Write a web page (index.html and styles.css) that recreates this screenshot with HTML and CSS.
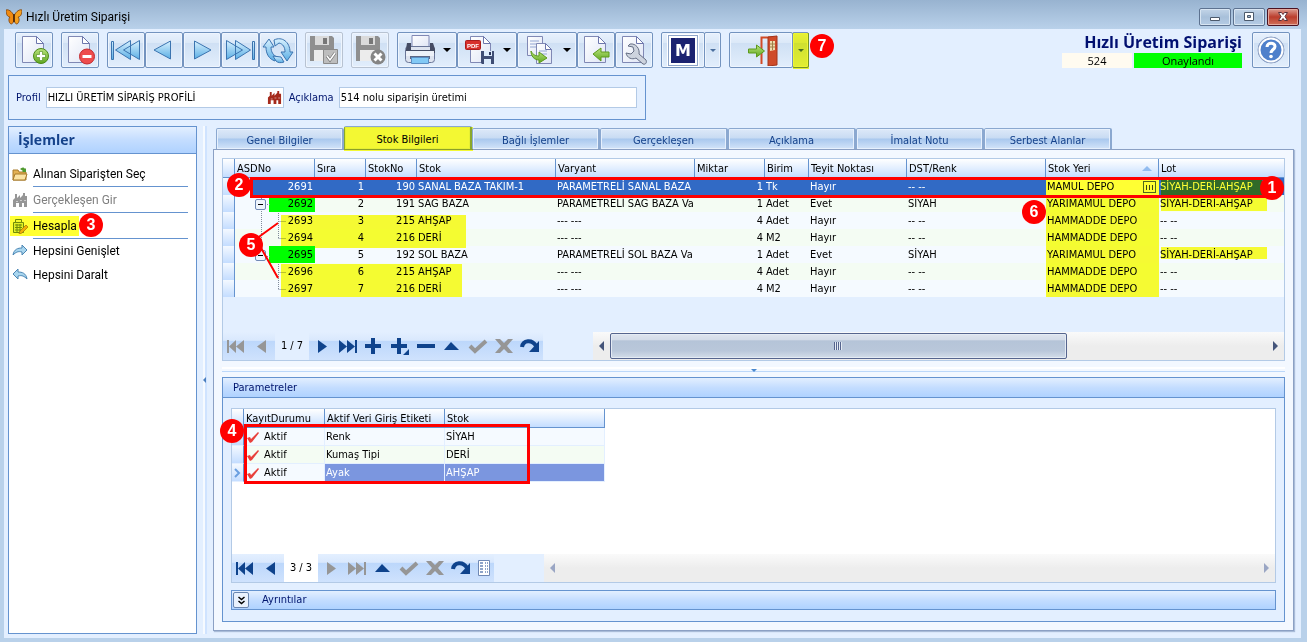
FILE: index.html
```html
<!DOCTYPE html>
<html lang="tr">
<head>
    <meta charset="UTF-8">
    <meta name="viewport" content="width=device-width, initial-scale=1.0">
    <title>Hızlı Üretim Siparişi</title>
    <link rel="stylesheet" href="styles.css">
</head>
<body>
    <!-- shared icons -->
    <svg class="defs" width="0" height="0" aria-hidden="true">
        <defs>
            <linearGradient id="blueFill" x1="0" y1="0" x2="0" y2="1">
                <stop offset="0" stop-color="#d8f1ff"/>
                <stop offset="1" stop-color="#5aaee4"/>
            </linearGradient>
            <linearGradient id="greenFill" x1="0" y1="0" x2="0" y2="1">
                <stop offset="0" stop-color="#b9e37c"/>
                <stop offset="1" stop-color="#5fa71f"/>
            </linearGradient>
            <linearGradient id="pageFill" x1="0" y1="0" x2="1" y2="1">
                <stop offset="0" stop-color="#ffffff"/>
                <stop offset="1" stop-color="#dfe5f5"/>
            </linearGradient>
            <symbol id="page" viewBox="0 0 32 32">
                <path d="M4.500 2.500h14l7 7v19h-21z" fill="url(#pageFill)" stroke="#8088b4"/>
                <path d="M18.500 2.500v7h7z" fill="#fff" stroke="#6c76ac"/>
            </symbol>
            <symbol id="disk" viewBox="0 0 32 32">
                <path d="M2 2h22l2 2v23H2z" fill="#8f8f8f"/>
                <path d="M7 2h14v9H7z" fill="#dadada"/>
                <path d="M15 4h4v6h-4z" fill="#777"/>
                <path d="M6 16h16v11H6z" fill="#ececec"/>
            </symbol>
            <symbol id="factory" viewBox="0 0 16 16">
                <path d="M1 15V8l2-2V2h2v4l3-3v3l3-3V1h2v3h2v11h-3v-4h-2v4H7v-4H4v4z" fill="currentColor"/>
                <path d="M4 9h2v1H4zM8 8h2v1H8zM12 8h2v1h-2z" fill="#fff" opacity=".5"/>
            </symbol>
            <symbol id="n-first" viewBox="0 0 26 18">
                <path d="M4 3h2v13H4zM13 3v13L6 9.500zM21 3v13l-8-6.500z" fill="currentColor"/>
            </symbol>
            <symbol id="n-prev" viewBox="0 0 26 18">
                <path d="M17 3v13L8 9.500z" fill="currentColor"/>
            </symbol>
            <symbol id="n-next" viewBox="0 0 26 18">
                <path d="M9 3v13l9-6.500z" fill="currentColor"/>
            </symbol>
            <symbol id="n-last" viewBox="0 0 26 18">
                <path d="M4 3v13l8-6.500zM12 3v13l8-6.500zM20 3h2v13h-2z" fill="currentColor"/>
            </symbol>
            <symbol id="n-plus" viewBox="0 0 26 18">
                <path d="M10 1h4v6h6v4h-6v6h-4v-6H4V7h6z" fill="currentColor"/>
            </symbol>
            <symbol id="n-plus2" viewBox="0 0 26 18">
                <path d="M10 1h4v6h6v4h-6v6h-4v-6H4V7h6zM22 12v6h-6z" fill="currentColor"/>
            </symbol>
            <symbol id="n-minus" viewBox="0 0 26 18">
                <path d="M4 7h18v4H4z" fill="currentColor"/>
            </symbol>
            <symbol id="n-up" viewBox="0 0 26 18">
                <path d="M12 5l8 8H5z" fill="currentColor"/>
            </symbol>
            <symbol id="n-ok" viewBox="0 0 26 18">
                <path d="M5 9l5 5L21 4" fill="none" stroke="currentColor" stroke-width="4"/>
            </symbol>
            <symbol id="n-cancel" viewBox="0 0 26 18">
                <path d="M4 2h5l4 4 4-4h5l-6 7 6 7h-5l-4-4-4 4H4l6-7z" fill="currentColor"/>
            </symbol>
            <symbol id="n-redo" viewBox="0 0 26 18">
                <path d="M5 10c1-7 10-8 14-1" fill="none" stroke="currentColor" stroke-width="4"/>
                <path d="M22 4v11H12z" fill="currentColor"/>
            </symbol>
            <symbol id="check" viewBox="0 0 14 12">
                <path d="M1 7l3-1 1 2 7-7 1 1-7 9-2 1z" fill="#e8403c"/>
            </symbol>
        </defs>
    </svg>

    <header class="titlebar">
        <svg class="app-icon" width="16" height="16" viewBox="0 0 16 16">
            <path d="M8 7C6 2 2 0 0 1c0 5 2 7 4 7-2 2-1 6 1 7 2 0 3-3 3-6z" fill="#f08a12" stroke="#7a3c06" stroke-width=".8"/>
            <path d="M8 7c2-5 6-7 8-6 0 5-2 7-4 7 2 2 1 6-1 7-2 0-3-3-3-6z" fill="#f5a020" stroke="#7a3c06" stroke-width=".8"/>
            <path d="M8 5v8" stroke="#40200a" stroke-width="1.500"/>
        </svg>
        <span class="window-title">Hızlı Üretim Siparişi</span>
        <div class="window-buttons">
            <button type="button" aria-label="Simge durumuna küçült"><svg width="30" height="16"><path d="M10.500 8.500h9v3h-9z" fill="#fff" stroke="#4c5a6c"/></svg></button>
            <button type="button" aria-label="Ekranı kapla"><svg width="30" height="16"><path d="M10.500 3.500h9v8h-9z" fill="#fff" stroke="#4c5a6c"/><path d="M13.500 6.500h3v2h-3z" fill="#9fb4cc" stroke="#4c5a6c"/></svg></button>
            <button type="button" class="close" aria-label="Kapat"><svg width="30" height="16"><path d="M10.500 3.500h3l1.500 2 1.500-2h3l-2.500 4 2.500 4h-3l-1.500-2-1.500 2h-3l2.500-4z" fill="#fff" stroke="#5a3038"/></svg></button>
        </div>
    </header>

    <main class="window">
        <div class="toolbar">
            <div class="tool-group">
                <button type="button" class="tool" aria-label="Yeni">
                    <svg width="32" height="32"><use href="#page"/><circle cx="23" cy="22" r="7.500" fill="url(#greenFill)" stroke="#4c8a16"/><path d="M21.500 17.500h3v3h3v3h-3v3h-3v-3h-3v-3h3z" fill="#fff" stroke="#4c8a16" stroke-width=".6"/></svg>
                </button>
            </div>
            <div class="tool-group">
                <button type="button" class="tool" aria-label="Sil">
                    <svg width="32" height="32"><use href="#page"/><circle cx="23" cy="22.500" r="7.500" fill="#ee4d4d" stroke="#c32a2e"/><path d="M18.500 21h9v3h-9z" fill="#fff"/></svg>
                </button>
            </div>
            <div class="tool-group">
                <button type="button" class="tool" aria-label="İlk kayıt">
                    <svg width="32" height="32"><path d="M1.500 7.500h2v18h-2zM20.500 6.500v19L5.500 16zM29.500 6.500v19L13.500 16z" fill="url(#blueFill)" stroke="#3b74b0"/></svg>
                </button>
                <button type="button" class="tool" aria-label="Önceki kayıt">
                    <svg width="32" height="32"><path d="M22.500 7v18L6 16z" fill="url(#blueFill)" stroke="#3b74b0"/></svg>
                </button>
                <button type="button" class="tool" aria-label="Sonraki kayıt">
                    <svg width="32" height="32"><path d="M8.500 7v18L25 16z" fill="url(#blueFill)" stroke="#3b74b0"/></svg>
                </button>
                <button type="button" class="tool" aria-label="Son kayıt">
                    <svg width="32" height="32"><path d="M28.500 7.500h2v18h-2zM11.500 6.500v19L26.500 16zM2.500 6.500v19L18.500 16z" fill="url(#blueFill)" stroke="#3b74b0"/></svg>
                </button>
                <button type="button" class="tool" aria-label="Yenile">
                    <svg width="32" height="32"><path d="M1 13L7 5l5 8H9c0 5 2 8 6 10l-2 4C7 25 4 20 4 13z" fill="url(#blueFill)" stroke="#3b74b0"/><path d="M31 18l-6 9-6-9h4c0-5-2-8-6-9l-4 3-1-6c8-4 16 2 16 12z" fill="url(#blueFill)" stroke="#3b74b0"/><path d="M14 27l-3-5 8 1 3 5c-3 1-6 1-8-1z" fill="url(#blueFill)" stroke="#3b74b0"/></svg>
                </button>
            </div>
            <div class="tool-group">
                <button type="button" class="tool" disabled aria-label="Kaydet">
                    <svg width="32" height="32"><use href="#disk"/><path d="M15.500 15.500h14v14h-14z" fill="#bdbdbd" stroke="#8a8a8a"/><path d="M19 22l3 4 5-7" fill="none" stroke="#777" stroke-width="3"/><path d="M19 22l3 4 5-7" fill="none" stroke="#fff" stroke-width="1.500"/></svg>
                </button>
            </div>
            <div class="tool-group">
                <button type="button" class="tool" disabled aria-label="Vazgeç">
                    <svg width="32" height="32"><use href="#disk"/><circle cx="24" cy="23" r="7.500" fill="#858585"/><path d="M20.500 19.500l7 7M27.500 19.500l-7 7" stroke="#fff" stroke-width="3"/></svg>
                </button>
            </div>
            <div class="tool-group">
                <button type="button" class="tool wide" aria-label="Yazdır">
                    <svg width="32" height="32"><path d="M8 1.500h17V13H8z" fill="url(#pageFill)" stroke="#8088b4"/><rect x="1.500" y="12.500" width="29" height="16" rx="3" fill="#dde3ef" stroke="#6a7698"/><path d="M3 9h4v7h19V9h3l2 6v4H2v-4z" fill="#454c63"/><path d="M2 17h28v5H2z" fill="#edf1f8"/><path d="M6 22h20v3H6z" fill="#5d6784"/><path d="M7.500 23.500h17v6h-17z" fill="#82c9f5" stroke="#5b8fc4"/></svg>
                    <span class="arrow"></span>
                </button>
                <button type="button" class="tool wide" aria-label="PDF olarak kaydet">
                    <svg width="32" height="32"><path d="M6.500 2.500h13l7 7v19h-20z" fill="url(#pageFill)" stroke="#8088b4"/><path d="M19.500 2.500v7h7z" fill="#fff" stroke="#6c76ac"/><rect x="1.500" y="6.500" width="15" height="9" rx="1" fill="#d8302c" stroke="#a81c1c"/><text x="3" y="14" class="pdf-text">PDF</text><path d="M17 17h13v13H18l-1-1z" fill="#3f4d74"/><path d="M20 17h8v5h-8zM20 25h7v5h-7z" fill="#dcebfb"/><path d="M25 18h2v3h-2z" fill="#2c365a"/></svg>
                    <span class="arrow"></span>
                </button>
                <button type="button" class="tool wide" aria-label="Kopyala">
                    <svg width="32" height="32"><path d="M3.500 2.500h15v19h-15z" fill="url(#pageFill)" stroke="#8088b4"/><path d="M6 7h9M6 10h9M6 13h6" stroke="#93a6d3"/><path d="M12.500 9.500h9l6 6v14h-15z" fill="url(#pageFill)" stroke="#8088b4"/><path d="M21.500 9.500v6h6z" fill="#fff" stroke="#6c76ac"/><path d="M15 17h8M15 20h8" stroke="#93a6d3"/><path d="M7 17c2 4 5 5 8 5v-4l8 6-8 5v-3c-5 0-8-4-8-9z" fill="url(#greenFill)" stroke="#5c9a1c"/></svg>
                    <span class="arrow"></span>
                </button>
                <button type="button" class="tool" aria-label="Aktar">
                    <svg width="32" height="32"><use href="#page"/><path d="M13 20l8-6v4h8v5h-8v4z" fill="url(#greenFill)" stroke="#5c9a1c"/></svg>
                </button>
                <button type="button" class="tool" aria-label="Ayarlar">
                    <svg width="32" height="32"><use href="#page"/><path d="M10 12l5 1 1 4-3 3-5-1c1 5 6 7 10 5l7 6c3 1 4-2 3-4l-7-6c1-5-3-11-9-10z" fill="#cdd3de" stroke="#656e84"/></svg>
                </button>
            </div>
            <div class="tool-group">
                <button type="button" class="tool module" aria-label="Modül"><span class="m-logo">M</span></button>
                <button type="button" class="tool drop" aria-label="Modül seçenekleri"><span class="arrow small"></span></button>
            </div>
            <div class="tool-group exit-group">
                <button type="button" class="tool exit" aria-label="Çıkış">
                    <svg width="32" height="32"><path d="M14.500 30V3.500h13" fill="none" stroke="#d24a26" stroke-width="2"/><path d="M21 3l9-1v29l-9 1z" fill="#cf4b2a" stroke="#a3341a"/><path d="M23 7h5v9l-5 1z" fill="#f0dcae"/><path d="M25.500 7v9M23 10h5M23 13h5" stroke="#a08048"/><path d="M1.500 15h8v-4l8 6-8 6v-4h-8z" fill="url(#greenFill)" stroke="#5c9a1c"/></svg>
                </button>
                <button type="button" class="tool exit-drop" aria-label="Çıkış seçenekleri"><span class="arrow small"></span></button>
                <span class="marker m7">7</span>
                <span class="highlight h-exit"></span>
            </div>
            <div class="doc-status">
                <h1>Hızlı Üretim Siparişi</h1>
                <div class="status-row">
                    <span class="doc-no">524</span>
                    <span class="doc-state">Onaylandı</span>
                </div>
            </div>
            <button type="button" class="tool help" aria-label="Yardım">
                <svg width="32" height="32" viewBox="0 0 32 32"><circle cx="16" cy="16" r="13" fill="#3f6cb8" stroke="#8d9fc0" stroke-width="1"/><circle cx="16" cy="16" r="11.500" fill="#4f80cb" stroke="#fff" stroke-width="2"/><path d="M12 13c0-5 8-5 8-.5 0 3-4 3-4 6.500" fill="none" stroke="#fff" stroke-width="3"/><circle cx="16" cy="22.500" r="1.800" fill="#fff"/></svg>
            </button>
        </div>

        <form class="profile" onsubmit="return false;">
            <label for="profil">Profil</label>
            <div class="lookup">
                <input type="text" id="profil" name="profil" value="HIZLI ÜRETİM SİPARİŞ PROFİLİ">
                <svg class="red" width="15" height="15"><use href="#factory"/></svg>
            </div>
            <label for="aciklama">Açıklama</label>
            <input type="text" id="aciklama" name="aciklama" class="desc" value="514 nolu siparişin üretimi">
        </form>

        <div class="workspace">
            <aside class="sidebar">
                <h2>İşlemler</h2>
                <ul>
                    <li>
                        <svg width="16" height="16" viewBox="0 0 16 16"><path d="M1 14V4h5l1 2h7v8z" fill="#e3b155" stroke="#a87a2a"/><path d="M3 8h12l-2 6H1z" fill="#fbe3a4" stroke="#a87a2a"/><path d="M8 3c2-2 4-2 5 0l1-1v4h-4l1-1c-1-1-2-1-3-2z" fill="#4f9a2f"/></svg>
                        <button type="button">Alınan Siparişten Seç</button>
                    </li>
                    <li>
                        <svg class="grey" width="16" height="16"><use href="#factory"/></svg>
                        <button type="button" disabled>Gerçekleşen Gir</button>
                    </li>
                    <li>
                        <svg width="16" height="16" viewBox="0 0 16 16"><path d="M1.500 4.500h10v10h-10z" fill="#e2efb8" stroke="#6f8c2c"/><path d="M3.500 1.500h6v3h-6z" fill="#f4f8dc" stroke="#6f8c2c"/><path d="M3 7h7M3 9.500h7M3 12h7M5 6v8M8 6v8" stroke="#6f8c2c"/><path d="M8 13l6-6 2 2-6 6-3 1z" fill="#f0b02a" stroke="#a5711a" stroke-width=".7"/></svg>
                        <button type="button">Hesapla</button>
                        <span class="highlight h-calc"></span>
                        <span class="marker m3">3</span>
                    </li>
                    <li class="plain">
                        <svg width="16" height="16" viewBox="0 0 16 16"><path d="M1 12c1-6 5-7 9-7V2l5 5-5 5V9c-4-1-6 0-9 3z" fill="#a9d6ef" stroke="#4b86b4"/></svg>
                        <button type="button">Hepsini Genişlet</button>
                    </li>
                    <li class="plain">
                        <svg width="16" height="16" viewBox="0 0 16 16"><path d="M15 12c-1-6-5-7-9-7V2L1 7l5 5V9c4-1 6 0 9 3z" fill="#a9d6ef" stroke="#4b86b4"/></svg>
                        <button type="button">Hepsini Daralt</button>
                    </li>
                </ul>
            </aside>

            <div class="v-splitter"><span></span></div>

            <section class="content">
                <nav class="tabs">
                    <button type="button">Genel Bilgiler</button>
                    <button type="button" class="active">Stok Bilgileri<span class="highlight h-tab"></span></button>
                    <button type="button">Bağlı İşlemler</button>
                    <button type="button">Gerçekleşen</button>
                    <button type="button">Açıklama</button>
                    <button type="button">İmalat Notu</button>
                    <button type="button">Serbest Alanlar</button>
                </nav>

                <div class="tab-page">
                    <div class="stock-grid">
                        <table class="grid">
                            <colgroup>
                                <col class="c-ind"><col class="c-asd"><col class="c-no"><col class="c-no"><col class="c-stok"><col class="c-stok">
                                <col class="c-mik"><col class="c-bir"><col class="c-tey"><col class="c-stok"><col class="c-yer"><col>
                            </colgroup>
                            <thead>
                                <tr>
                                    <th></th><th>ASDNo</th><th>Sıra</th><th>StokNo</th><th>Stok</th><th>Varyant</th>
                                    <th>Miktar</th><th>Birim</th><th>Teyit Noktası</th><th>DST/Renk</th><th class="sorted">Stok Yeri</th><th>Lot</th>
                                </tr>
                            </thead>
                            <tbody>
                                <tr class="selected">
                                    <td></td><td class="num">2691</td><td class="num">1</td><td class="num">190</td><td>SANAL BAZA TAKIM-1</td><td>PARAMETRELİ SANAL BAZA</td>
                                    <td class="num">1</td><td>Tk</td><td>Hayır</td><td>-- --</td><td class="editing">MAMUL DEPO<button type="button" aria-label="Depo seç"></button></td><td>SİYAH-DERİ-AHŞAP</td>
                                </tr>
                                <tr class="parent">
                                    <td></td><td class="num"><button type="button" class="toggle" aria-label="Daralt"></button>2692</td><td class="num">2</td><td class="num">191</td><td>SAĞ BAZA</td><td>PARAMETRELİ SAĞ BAZA Va</td>
                                    <td class="num">1</td><td>Adet</td><td>Evet</td><td>SİYAH</td><td>YARIMAMUL DEPO</td><td>SİYAH-DERİ-AHŞAP</td>
                                </tr>
                                <tr>
                                    <td></td><td class="num">2693</td><td class="num">3</td><td class="num">215</td><td>AHŞAP</td><td>--- ---</td>
                                    <td class="num">4</td><td>Adet</td><td>Hayır</td><td>-- --</td><td>HAMMADDE DEPO</td><td>-- --</td>
                                </tr>
                                <tr>
                                    <td></td><td class="num">2694</td><td class="num">4</td><td class="num">216</td><td>DERİ</td><td>--- ---</td>
                                    <td class="num">4</td><td>M2</td><td>Hayır</td><td>-- --</td><td>HAMMADDE DEPO</td><td>-- --</td>
                                </tr>
                                <tr class="parent">
                                    <td></td><td class="num"><button type="button" class="toggle" aria-label="Daralt"></button>2695</td><td class="num">5</td><td class="num">192</td><td>SOL BAZA</td><td>PARAMETRELİ SOL BAZA Va</td>
                                    <td class="num">1</td><td>Adet</td><td>Evet</td><td>SİYAH</td><td>YARIMAMUL DEPO</td><td>SİYAH-DERİ-AHŞAP</td>
                                </tr>
                                <tr>
                                    <td></td><td class="num">2696</td><td class="num">6</td><td class="num">215</td><td>AHŞAP</td><td>--- ---</td>
                                    <td class="num">4</td><td>Adet</td><td>Hayır</td><td>-- --</td><td>HAMMADDE DEPO</td><td>-- --</td>
                                </tr>
                                <tr>
                                    <td></td><td class="num">2697</td><td class="num">7</td><td class="num">216</td><td>DERİ</td><td>--- ---</td>
                                    <td class="num">4</td><td>M2</td><td>Hayır</td><td>-- --</td><td>HAMMADDE DEPO</td><td>-- --</td>
                                </tr>
                            </tbody>
                        </table>

                        <div class="grid-footer">
                            <div class="navigator">
                                <button type="button" disabled aria-label="İlk"><svg><use href="#n-first"/></svg></button>
                                <button type="button" disabled aria-label="Önceki"><svg><use href="#n-prev"/></svg></button>
                                <span class="counter">1 / 7</span>
                                <button type="button" aria-label="Sonraki"><svg><use href="#n-next"/></svg></button>
                                <button type="button" aria-label="Son"><svg><use href="#n-last"/></svg></button>
                                <button type="button" aria-label="Ekle"><svg><use href="#n-plus"/></svg></button>
                                <button type="button" aria-label="Alt kayıt ekle"><svg><use href="#n-plus2"/></svg></button>
                                <button type="button" aria-label="Sil"><svg><use href="#n-minus"/></svg></button>
                                <button type="button" aria-label="Düzenle"><svg><use href="#n-up"/></svg></button>
                                <button type="button" disabled aria-label="Onayla"><svg><use href="#n-ok"/></svg></button>
                                <button type="button" disabled aria-label="İptal"><svg><use href="#n-cancel"/></svg></button>
                                <button type="button" aria-label="Yenile"><svg><use href="#n-redo"/></svg></button>
                            </div>
                            <div class="h-scroll">
                                <button type="button" class="to-left" aria-label="Sola kaydır"></button>
                                <div class="track"><div class="thumb"><i></i></div></div>
                                <button type="button" class="to-right" aria-label="Sağa kaydır"></button>
                            </div>
                        </div>

                        <!-- tree lines of the first column -->
                        <svg class="tree-lines" width="94" height="140" viewBox="0 0 94 140">
                            <path d="M38.500 52v38M38.500 40v-4M44 45.500h4M44 97.500h4M55.500 54v25M55.500 62.500h8M55.500 79.500h8M55.500 105v25M55.500 113.500h8M55.500 130.500h8"/>
                        </svg>

                        <!-- callouts over the grid -->
                        <span class="highlight h-sub1"></span>
                        <span class="highlight h-sub2"></span>
                        <span class="highlight h-depot"></span>
                        <span class="highlight h-lot1"></span>
                        <span class="highlight h-lot2"></span>
                        <span class="highlight h-lot5"></span>
                        <span class="frame f-row"></span>
                        <svg class="pointer" width="40" height="60" viewBox="0 0 40 60"><path d="M9 20L31 4M9 20L31 59"/></svg>
                        <span class="marker m1">1</span>
                        <span class="marker m2">2</span>
                        <span class="marker m5">5</span>
                        <span class="marker m6">6</span>
                    </div>

                    <div class="h-splitter"><span></span></div>

                    <div class="params">
                        <h3>Parametreler</h3>
                        <div class="params-body">
                            <div class="params-grid">
                                <table class="grid small">
                                    <colgroup><col class="c-ind"><col class="c-dur"><col class="c-etk"><col class="c-prm"></colgroup>
                                    <thead>
                                        <tr><th></th><th>KayıtDurumu</th><th>Aktif Veri Giriş Etiketi</th><th>Stok</th></tr>
                                    </thead>
                                    <tbody>
                                        <tr><td></td><td><svg class="tick" width="14" height="12"><use href="#check"/></svg>Aktif</td><td>Renk</td><td>SİYAH</td></tr>
                                        <tr><td></td><td><svg class="tick" width="14" height="12"><use href="#check"/></svg>Aktif</td><td>Kumaş Tipi</td><td>DERİ</td></tr>
                                        <tr class="current"><td><svg class="cursor" width="8" height="10" viewBox="0 0 8 10"><path d="M2 1l4 4-4 4" fill="none" stroke="#6a9fe0" stroke-width="2"/></svg></td><td><svg class="tick" width="14" height="12"><use href="#check"/></svg>Aktif</td><td>Ayak</td><td>AHŞAP</td></tr>
                                    </tbody>
                                </table>
                                <div class="grid-footer">
                                    <div class="navigator">
                                        <button type="button" aria-label="İlk"><svg><use href="#n-first"/></svg></button>
                                        <button type="button" aria-label="Önceki"><svg><use href="#n-prev"/></svg></button>
                                        <span class="counter">3 / 3</span>
                                        <button type="button" disabled aria-label="Sonraki"><svg><use href="#n-next"/></svg></button>
                                        <button type="button" disabled aria-label="Son"><svg><use href="#n-last"/></svg></button>
                                        <button type="button" aria-label="Düzenle"><svg><use href="#n-up"/></svg></button>
                                        <button type="button" disabled aria-label="Onayla"><svg><use href="#n-ok"/></svg></button>
                                        <button type="button" disabled aria-label="İptal"><svg><use href="#n-cancel"/></svg></button>
                                        <button type="button" aria-label="Yenile"><svg><use href="#n-redo"/></svg></button>
                                        <button type="button" class="narrow" aria-label="Liste"><svg viewBox="0 0 20 18"><path d="M4.500 1.500h11v15h-11z" fill="#fff" stroke="#7089b5"/><path d="M6 4h3M6 10h3M11 4h1M13 4h1M11 7h1M13 7h1M11 10h1M13 10h1M11 13h1M13 13h1M6 7h3M6 13h3" stroke="#6a86b8" stroke-width="1.500"/></svg></button>
                                    </div>
                                    <div class="h-scroll idle">
                                        <button type="button" class="to-left" aria-label="Sola kaydır"></button>
                                        <div class="track"></div>
                                        <button type="button" class="to-right" aria-label="Sağa kaydır"></button>
                                    </div>
                                </div>
                                <span class="frame f-params"></span>
                                <span class="marker m4">4</span>
                            </div>
                            <div class="details-bar">
                                <button type="button" aria-label="Ayrıntıları aç"><svg width="9" height="9" viewBox="0 0 9 9"><path d="M1.500 1l3 2.500 3-2.500M1.500 5l3 2.500 3-2.500" fill="none" stroke="#000" stroke-width="1.500"/></svg></button>
                                <span>Ayrıntılar</span>
                            </div>
                        </div>
                    </div>
                </div>
            </section>
        </div>
    </main>
</body>
</html>
```
FILE: styles.css
```css
* {
    box-sizing: border-box;
}
body {
    display: flex;
    flex-direction: column;
    min-height: 100vh;
    margin: 0;
    padding: 0 6px 4px 4px;
    background: linear-gradient(#98b3d0, #b9d1ea 29px);
    color: #000;
    font-family: "DejaVu Sans Condensed", "DejaVu Sans", sans-serif;
    font-size: 11px;
    line-height: 16px;
}
button,
input {
    padding: 0;
    border: 0;
    background: none;
    color: inherit;
    font: inherit;
}
h1, h2, h3, ul {
    margin: 0;
    padding: 0;
}
svg {
    display: block;
    flex: none;
}
.defs {
    position: absolute;
}

/* Title bar */
.titlebar {
    display: flex;
    align-items: center;
    gap: 4px;
    height: 29px;
    padding: 4px 0 0 2px;
    font-family: Roboto, sans-serif;
    font-size: 12px;
}
.window-buttons {
    display: flex;
    gap: 2px;
    margin-left: auto;
    padding-right: 2px;
}
.window-buttons button {
    width: 32px;
    height: 18px;
    border: 1px solid #5d7290;
    border-radius: 2px;
    background: linear-gradient(#c3d5e8, #a8c0da 50%, #b4cbe4);
    box-shadow: inset 0 0 0 1px #d8e5f2;
}
.window-buttons .close {
    border-color: #4c1220;
    background: linear-gradient(#dc9c90, #bb3d2c 50%, #d0705a);
    box-shadow: inset 0 0 0 1px #e4a89c;
}

/* Main window */
.window {
    display: flex;
    flex: 1;
    flex-direction: column;
    padding: 3px 7px 4px 4px;
    background: #e3efff;
}
.toolbar {
    display: flex;
    gap: 8px;
    padding: 0 4px 0 7px;
}
.tool-group {
    display: flex;
    position: relative;
}
.tool {
    display: flex;
    align-items: center;
    justify-content: center;
    width: 38px;
    height: 36px;
    border: 1px solid #7393bf;
    border-radius: 2px;
    background: linear-gradient(#e8f1fd, #dce9f8 28%, #cfe0f4 30%, #e2eefc);
    box-shadow: inset 0 0 0 1px #eef5fe;
}
.tool:disabled {
    border-color: #b8c3d2;
}
.tool.wide {
    gap: 7px;
    width: 60px;
}
.tool.module {
    width: 44px;
}
.tool.drop,
.tool.exit-drop {
    width: 17px;
    margin-left: -1px;
}
.tool.exit {
    width: 64px;
}
.tool.exit svg {
    margin-left: 4px;
}
.arrow {
    border: 4px solid transparent;
    border-top-color: #000;
    border-bottom: 0;
}
.arrow.small {
    border-width: 3px;
    border-top-color: #4a6f9e;
    border-bottom: 0;
}
.pdf-text {
    fill: #fff;
    font-family: "Liberation Sans", sans-serif;
    font-size: 6px;
    font-weight: bold;
}
.m-logo {
    width: 30px;
    height: 31px;
    border: 1px solid #8ea5ca;
    outline: 1px solid #fff;
    background: #1b2270;
    box-shadow: inset 0 0 0 2px #fff;
    color: #fff;
    font-family: "DejaVu Sans", sans-serif;
    font-size: 16px;
    font-weight: bold;
    line-height: 29px;
}
.doc-status {
    margin-left: auto;
    text-align: right;
}
.doc-status h1 {
    height: 21px;
    color: #000f70;
    font-family: "Open Sans", sans-serif;
    font-size: 16px;
    line-height: 20px;
}
.status-row {
    display: flex;
    gap: 2px;
    justify-content: flex-end;
    font-family: "Open Sans", sans-serif;
    line-height: 15px;
    text-align: center;
}
.doc-no {
    width: 70px;
    background: #fffbf0;
}
.doc-state {
    width: 108px;
    background: #0f0;
}
.tool.help {
    margin-left: 2px;
}

/* Profile row */
.profile {
    display: flex;
    align-items: center;
    align-self: flex-start;
    gap: 5px;
    height: 45px;
    margin-top: 7px;
    padding: 0 8px 0 7px;
    border: 1px solid #6593cf;
    color: #00156e;
}
.profile input {
    width: 100%;
    height: 21px;
    padding: 0 1px;
    border: 1px solid #b3cae6;
    background: #fff;
    color: #000;
}
.lookup {
    position: relative;
    width: 238px;
}
.lookup svg {
    position: absolute;
    top: 3px;
    right: 2px;
}
.profile .desc {
    width: 298px;
}
.red {
    color: #a52a1c;
}
.grey {
    color: #969696;
}

/* Workspace */
.workspace {
    display: flex;
    flex: 1;
    margin-top: 6px;
}
.sidebar {
    width: 189px;
    border: 1px solid #6593cf;
    background: #fff;
    font-family: Roboto, sans-serif;
    font-size: 12px;
}
.sidebar h2 {
    height: 27px;
    padding-left: 9px;
    border-bottom: 1px solid #6593cf;
    background: linear-gradient(#e3efff, #c4ddff 50%, #afd2ff);
    color: #15428b;
    font-family: "Open Sans", sans-serif;
    font-size: 14px;
    line-height: 26px;
}
.sidebar ul {
    padding: 7px 8px 0 3px;
    list-style: none;
}
.sidebar li {
    display: flex;
    position: relative;
    align-items: center;
    gap: 5px;
    height: 26px;
}
.sidebar li button:disabled {
    color: #808080;
}
.sidebar li::after {
    content: "";
    position: absolute;
    right: 0;
    bottom: 0;
    left: 21px;
    border-bottom: 1px solid #6593cf;
}
.sidebar .plain {
    height: 24px;
}
.sidebar .plain::after {
    display: none;
}
.v-splitter {
    display: flex;
    align-items: center;
    width: 4px;
    margin: 0 6px;
    border-left: 2px solid #f6faff;
    border-right: 2px solid #cfe3ff;
}
.v-splitter span {
    margin-left: -2px;
    border: 3px solid transparent;
    border-right-color: #4a7ebf;
    border-left: 0;
}
.content {
    display: flex;
    flex: 1;
    flex-direction: column;
    min-width: 0;
}

/* Tabs */
.tabs {
    display: flex;
    align-items: flex-end;
    height: 23px;
    padding-left: 3px;
}
.tabs button {
    position: relative;
    width: 128px;
    height: 21px;
    padding-top: 3px;
    border: 1px solid #8ba8d0;
    border-right: 2px solid #8ba8d0;
    border-bottom: 0;
    border-radius: 2px 2px 0 0;
    background: linear-gradient(#dde9f8, #c8dbf3 45%, #a9c8ee 50%, #d3e4f9);
    box-shadow: inset 0 0 0 1px #e6f0fd;
    color: #15428b;
}
.tabs .active {
    height: 23px;
    background: #f3f8ff;
    color: #000;
}
.tab-page {
    display: flex;
    flex: 1;
    flex-direction: column;
    margin-bottom: 3px;
    padding: 8px;
    border: 1px solid #8ba0c4;
    background: #f3f8ff;
    box-shadow: 1px 1px 1px #a9bcd8;
}

/* Grids */
.stock-grid {
    display: flex;
    position: relative;
    flex-direction: column;
    height: 203px;
    border: 1px solid #b3cae6;
    background: #e3efff;
}
.grid {
    width: 100%;
    border-spacing: 0;
    table-layout: fixed;
}
.grid.small {
    width: 373px;
}
.c-ind { width: 12px; }
.c-asd { width: 80px; }
.c-no { width: 51px; }
.c-stok { width: 139px; }
.c-mik { width: 70px; }
.c-bir { width: 44px; }
.c-tey { width: 98px; }
.c-yer { width: 113px; }
.c-dur { width: 81px; }
.c-etk { width: 120px; }
.c-prm { width: 160px; }
.grid th {
    height: 19px;
    padding: 1px 2px 0;
    border-right: 1px solid #6593cf;
    border-bottom: 1px solid #6593cf;
    background: linear-gradient(#fff, #e3efff 50%, #c4ddff);
    font-weight: normal;
    text-align: left;
    line-height: 17px;
}
.stock-grid th:last-child {
    border-right: 0;
}
.grid td {
    height: 17px;
    padding: 1px 1px 0;
    overflow: hidden;
    background: #f5faff;
    line-height: 16px;
    white-space: nowrap;
}
.grid tr:nth-child(even) td {
    background: #f4fcf3;
}
.grid tbody td:first-child,
.grid tbody tr:nth-child(even) td:first-child {
    border-right: 1px solid #6593cf;
    background: linear-gradient(#f4f9ff, #c4ddff);
}
.grid .num {
    padding-right: 2px;
    text-align: right;
}
.grid .selected td {
    background: #316ac5;
    color: #fff;
}
.grid .selected td:nth-child(2) {
    background: linear-gradient(to right, #f5faff 18px, #316ac5 18px);
}
.grid tbody .parent td:nth-child(2) {
    background: linear-gradient(to right, #f5faff 34px, #0f0 34px);
}
.grid .selected .editing {
    background: #fff;
    color: #000;
}
.editing button {
    float: right;
    width: 13px;
    height: 12px;
    margin: 2px;
    border: 1px solid #50688c;
    background: repeating-linear-gradient(to right, #3c4660 0 1px, transparent 1px 3px) center / 7px 5px no-repeat;
}
.sorted::after {
    content: "";
    float: right;
    margin: 6px 4px;
    border: 5px solid transparent;
    border-top: 0;
    border-bottom-color: #92bcf0;
}
.toggle {
    float: left;
    width: 11px;
    height: 11px;
    margin: 3px 0 0 19px;
    border: 1px solid #7089b5;
    border-radius: 2px;
    background: linear-gradient(#000, #000) center / 5px 1px no-repeat #eef4fc;
}
.tree-lines {
    position: absolute;
    top: 0;
    left: 0;
}
.tree-lines path {
    fill: none;
    stroke: #808a9a;
    stroke-dasharray: 1 1;
}

/* Navigator and scroll bar */
.grid-footer {
    display: flex;
    height: 28px;
    margin-top: auto;
}
.navigator {
    display: flex;
    color: #0f438c;
}
.navigator button {
    width: 26px;
    background: linear-gradient(#e3efff, #d9e8fd 30%, #bcd7fb 32%, #cfe2fd);
}
.navigator button:disabled {
    color: #969696;
}
.navigator svg {
    width: 26px;
    height: 18px;
}
.navigator .narrow,
.navigator .narrow svg {
    width: 20px;
}
.counter {
    width: 34px;
    color: #000;
    line-height: 28px;
    text-align: center;
}
.h-scroll {
    display: flex;
    flex: 1;
    margin-left: 50px;
    background: linear-gradient(#fafafa, #ededed 50%);
}
.h-scroll button {
    display: flex;
    align-items: center;
    justify-content: center;
    width: 17px;
    color: #45557a;
}
.to-left::before,
.to-right::before {
    content: "";
    border: 5px solid transparent;
    border-right-color: currentColor;
    border-left: 0;
}
.to-right::before {
    border-right: 0;
    border-left: 5px solid currentColor;
}
.h-scroll.idle button {
    color: #9aa6c4;
}
.track {
    flex: 1;
    padding: 1px 0;
}
.thumb {
    display: flex;
    align-items: center;
    justify-content: center;
    width: 69.5%;
    height: 26px;
    border: 1px solid #56658e;
    border-radius: 2px;
    background: linear-gradient(#dfe4ee, #d3dbe8 25%, #b5c4d8 28%, #b9c7da 70%, #d3dde9);
    box-shadow: inset 0 0 0 1px #e4ebf4;
}
.thumb i {
    width: 8px;
    height: 8px;
    background: repeating-linear-gradient(to right, #56658e 0 1px, #e4ebf4 1px 2px);
}
.h-splitter {
    display: flex;
    justify-content: center;
    height: 5px;
    margin: 6px 0 5px;
    border-top: 2px solid #fff;
    border-bottom: 1px solid #bcd8fa;
}
.h-splitter span {
    border: 3px solid transparent;
    border-top-color: #4a88cf;
    border-bottom: 0;
}

/* Parameters */
.params {
    display: flex;
    flex: 1;
    flex-direction: column;
    border: 1px solid #6593cf;
    background: #e3efff;
}
.params h3,
.details-bar {
    border-bottom: 1px solid #6593cf;
    background: linear-gradient(#e3efff, #c4ddff 50%, #afd2ff);
    color: #00156e;
    font-size: 11px;
    font-weight: normal;
}
.params h3 {
    height: 20px;
    padding-left: 10px;
    line-height: 20px;
}
.params-body {
    display: flex;
    flex: 1;
    flex-direction: column;
    gap: 7px;
    padding: 10px 8px 11px;
}
.params-grid {
    display: flex;
    position: relative;
    flex: 1;
    flex-direction: column;
    border: 1px solid #b3cae6;
    background: #fff;
}
.params-grid td {
    height: 18px;
    border-right: 1px solid #e3efff;
    border-bottom: 1px solid #e3efff;
}
.params-grid .current td:nth-child(n + 3) {
    background: #7b96df;
    color: #fff;
}
.tick {
    float: left;
    margin: 2px 4px 0 1px;
}
.params-grid .grid-footer {
    background: linear-gradient(to right, #fff 86px, #e3efff 86px);
}
.details-bar {
    display: flex;
    align-items: center;
    gap: 13px;
    height: 20px;
    padding-left: 1px;
    border: 1px solid #6593cf;
    line-height: 18px;
}
.details-bar button {
    display: flex;
    align-items: center;
    justify-content: center;
    width: 16px;
    height: 16px;
    border: 1px solid #6a86b0;
    border-radius: 2px;
    background: #e8f1fd;
}

/* Callouts */
.marker,
.highlight,
.frame,
.pointer {
    position: absolute;
    pointer-events: none;
}
.marker {
    width: 24px;
    height: 24px;
    border-radius: 50%;
    background: #f00;
    color: #fff;
    font-family: "Liberation Sans", sans-serif;
    font-size: 16px;
    font-weight: bold;
    line-height: 24px;
    text-align: center;
}
.highlight {
    background: #ff3;
    mix-blend-mode: multiply;
}
.frame {
    border: 3px solid #f00;
}
.pointer path {
    fill: none;
    stroke: #f00;
    stroke-width: 2;
}
.m1 { top: 17px; right: 0; }
.m2 { top: 14px; left: 4px; }
.m3 { top: 0; left: 67px; }
.m4 { top: 10px; left: -12px; }
.m5 { top: 74px; left: 16px; }
.m6 { top: 41px; left: 799px; }
.m7 { top: 2px; left: 81px; }
.h-exit { top: 1px; left: 64px; width: 16px; height: 36px; }
.h-calc { top: 3px; left: -2px; width: 69px; height: 20px; }
.h-tab { top: 0; left: -1px; width: 129px; height: 24px; }
.h-sub1 { top: 56px; left: 58px; width: 185px; height: 33px; }
.h-sub2 { top: 105px; left: 58px; width: 181px; height: 33px; }
.h-depot { top: 21px; left: 823px; width: 113px; height: 117px; }
.h-lot1 { top: 21px; left: 938px; width: 101px; height: 16px; }
.h-lot2 { top: 37px; left: 938px; width: 106px; height: 15px; }
.h-lot5 { top: 88px; left: 938px; width: 106px; height: 12px; }
.f-row { top: 18px; right: 12px; left: 27px; height: 21px; }
.f-params { top: 15px; left: 12px; width: 286px; height: 60px; }
.pointer { top: 60px; left: 24px; }
```
